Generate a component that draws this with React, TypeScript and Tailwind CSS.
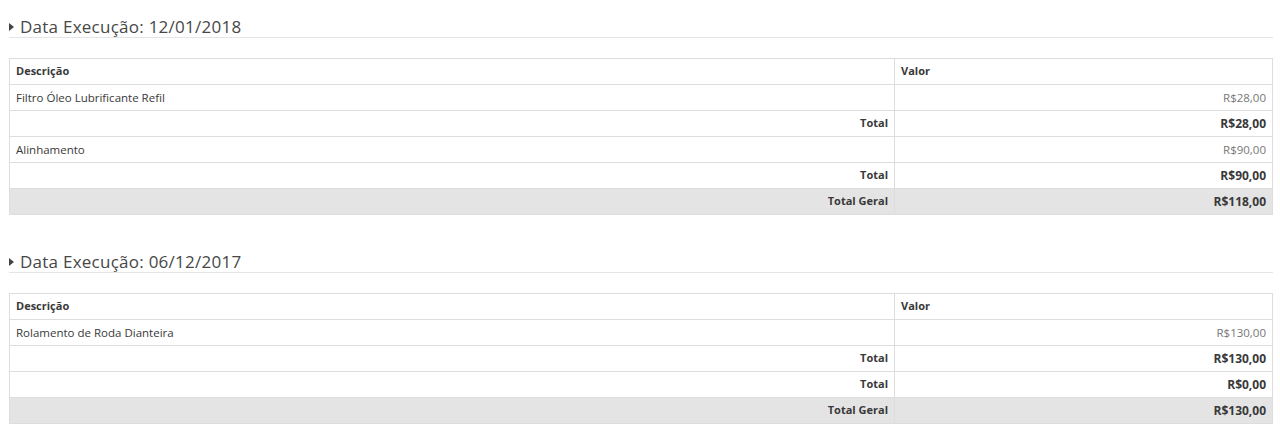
import React from 'react';

type Row = { kind: 'item' | 'total' | 'geral'; label: string; valor: string };

interface Execucao {
  data: string;
  rows: Row[];
}

const execucoes: Execucao[] = [
  {
    data: '12/01/2018',
    rows: [
      { kind: 'item', label: 'Filtro Óleo Lubrificante Refil', valor: 'R$28,00' },
      { kind: 'total', label: 'Total', valor: 'R$28,00' },
      { kind: 'item', label: 'Alinhamento', valor: 'R$90,00' },
      { kind: 'total', label: 'Total', valor: 'R$90,00' },
      { kind: 'geral', label: 'Total Geral', valor: 'R$118,00' },
    ],
  },
  {
    data: '06/12/2017',
    rows: [
      { kind: 'item', label: 'Rolamento de Roda Dianteira', valor: 'R$130,00' },
      { kind: 'total', label: 'Total', valor: 'R$130,00' },
      { kind: 'total', label: 'Total', valor: 'R$0,00' },
      { kind: 'geral', label: 'Total Geral', valor: 'R$130,00' },
    ],
  },
];

const Caret = () => (
  <svg width="5" height="8" viewBox="0 0 5 8" className="mr-[6px] shrink-0">
    <path d="M0 0 L5 4 L0 8 Z" fill="#444" />
  </svg>
);

const Section = ({ item }: { item: Execucao }) => {
  return (
    <div className="mb-[37px]">
      <h4 className="flex items-center border-b border-[#e5e5e5] text-[17px] leading-[20px] text-[#474747] tracking-[0.25px]">
        <Caret />
        Data Execução: {item.data}
      </h4>
      <table className="mt-[20px] w-full table-fixed border-collapse text-[11.5px]">
        <thead>
          <tr className="h-[26px]">
            <th className="w-[885px] border border-[#dddddd] px-[6px] text-left text-[11px] font-bold text-[#393939]">
              Descrição
            </th>
            <th className="border border-[#dddddd] px-[6px] text-left text-[11px] font-bold text-[#393939]">
              Valor
            </th>
          </tr>
        </thead>
        <tbody>
          {item.rows.map((r, i) => {
            if (r.kind === 'item') {
              return (
                <tr key={i} className="h-[26px]">
                  <td className="border border-[#dddddd] px-[6px] text-[#393939]">{r.label}</td>
                  <td className="border border-[#dddddd] px-[6px] text-right text-[#777777]">{r.valor}</td>
                </tr>
              );
            }
            return (
              <tr key={i} className={`h-[26px] ${r.kind === 'geral' ? 'bg-[#e4e4e4]' : ''}`}>
                <td className="border border-[#dddddd] px-[6px] text-right text-[11px] font-bold text-[#393939]">{r.label}</td>
                <td className="border border-[#dddddd] px-[6px] text-right text-[12px] font-bold text-[#393939]">{r.valor}</td>
              </tr>
            );
          })}
        </tbody>
      </table>
    </div>
  );
};

const App = () => {
  return (
    <div className="min-h-screen bg-white pl-[9px] pr-[7px] pt-[17px] font-['Open_Sans',sans-serif]">
      {execucoes.map((e, i) => (
        <Section key={i} item={e} />
      ))}
    </div>
  );
};

export default App;
